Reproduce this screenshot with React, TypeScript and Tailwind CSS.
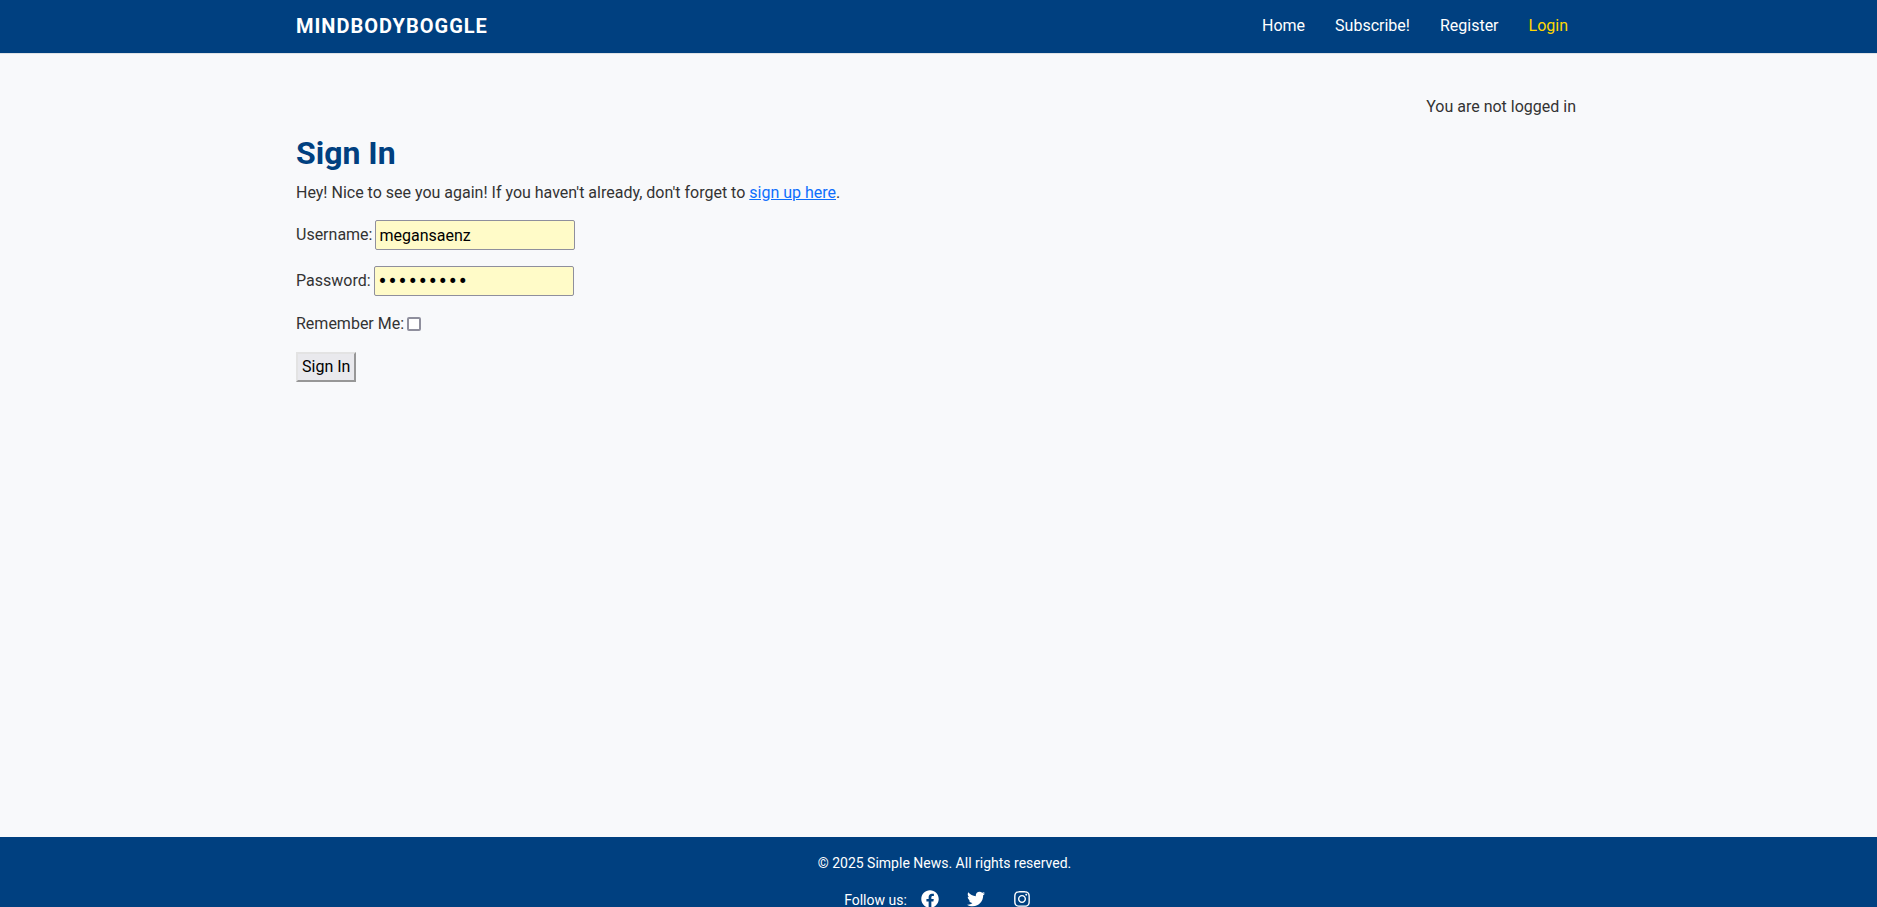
import { FaFacebook, FaTwitter, FaInstagram } from "react-icons/fa";

const links = [
  { label: "Home" },
  { label: "Subscribe!" },
  { label: "Register" },
  { label: "Login", active: true },
];

const social = [
  { label: "Facebook", Icon: FaFacebook },
  { label: "Twitter", Icon: FaTwitter },
  { label: "Instagram", Icon: FaInstagram },
];

const field =
  "h-[30px] w-[200px] rounded-[2px] border border-[#8f8f9d] bg-[#fffbc8] px-[3px] text-black outline-none";

export default function App() {
  return (
    <div className="flex h-screen flex-col overflow-hidden bg-[#f8f9fb] font-['Roboto',sans-serif] text-base leading-6 text-[#333333]">
      <header className="shrink-0 border-b border-[#dee2e6] bg-[#004080] pr-[5px]">
        <div className="mx-auto flex h-[53px] max-w-7xl items-center justify-between pb-px">
          <a href="#" className="text-xl font-bold tracking-[1px] text-white">
            MINDBODYBOGGLE
          </a>
          <nav className="flex gap-[30px] pr-2">
            {links.map((l) => (
              <a
                key={l.label}
                href="#"
                className={l.active ? "text-[#ffd700]" : "text-white"}
              >
                {l.label}
              </a>
            ))}
          </nav>
        </div>
      </header>

      <main className="flex-1 pt-[41px] pr-[5px]">
        <div className="mx-auto max-w-7xl">
          <p className="text-right">You are not logged in</p>
          <h1 className="mt-3.5 mb-2 text-[32px] leading-[40px] font-bold text-[#004080]">
            Sign In
          </h1>
          <p>
            Hey! Nice to see you again! If you haven't already, don't forget to{" "}
            <a href="#" className="text-[#0d6efd] underline">
              sign up here
            </a>
            .
          </p>
          <form
            className="mt-[15px] flex flex-col items-start gap-4"
            onSubmit={(e) => e.preventDefault()}
          >
            <div className="flex items-center gap-[3px]">
              <label htmlFor="username">Username:</label>
              <input id="username" type="text" defaultValue="megansaenz" className={field} />
            </div>
            <div className="flex items-center gap-[3px]">
              <label htmlFor="password">Password:</label>
              <input
                id="password"
                type="password"
                defaultValue="boggle123"
                className={`${field} font-['DejaVu_Sans',sans-serif] text-[17px]`}
              />
            </div>
            <div className="flex items-center gap-[3px]">
              <label htmlFor="remember">Remember Me:</label>
              <input
                id="remember"
                type="checkbox"
                className="size-[14px] appearance-none rounded-[2px] border-2 border-[#8f8f9d] bg-white checked:bg-[#0060df]"
              />
            </div>
            <button
              type="submit"
              className="h-[30px] border-2 border-t-[#e3e3e3] border-r-[#979797] border-b-[#979797] border-l-[#e3e3e3] bg-[#e9e9ed] px-1 leading-[26px] text-black"
            >
              Sign In
            </button>
          </form>
        </div>
      </main>

      <footer className="h-[70px] shrink-0 bg-[#004080] pt-4 pl-3 text-center text-sm leading-[21px] text-white">
        <p>© 2025 Simple News. All rights reserved.</p>
        <div className="mt-4 flex items-start justify-center">
          <span>Follow us:</span>
          {social.map(({ label, Icon }) => (
            <a key={label} href="#" aria-label={label} className="mx-[14px]">
              <Icon size={18} />
            </a>
          ))}
        </div>
      </footer>
    </div>
  );
}
